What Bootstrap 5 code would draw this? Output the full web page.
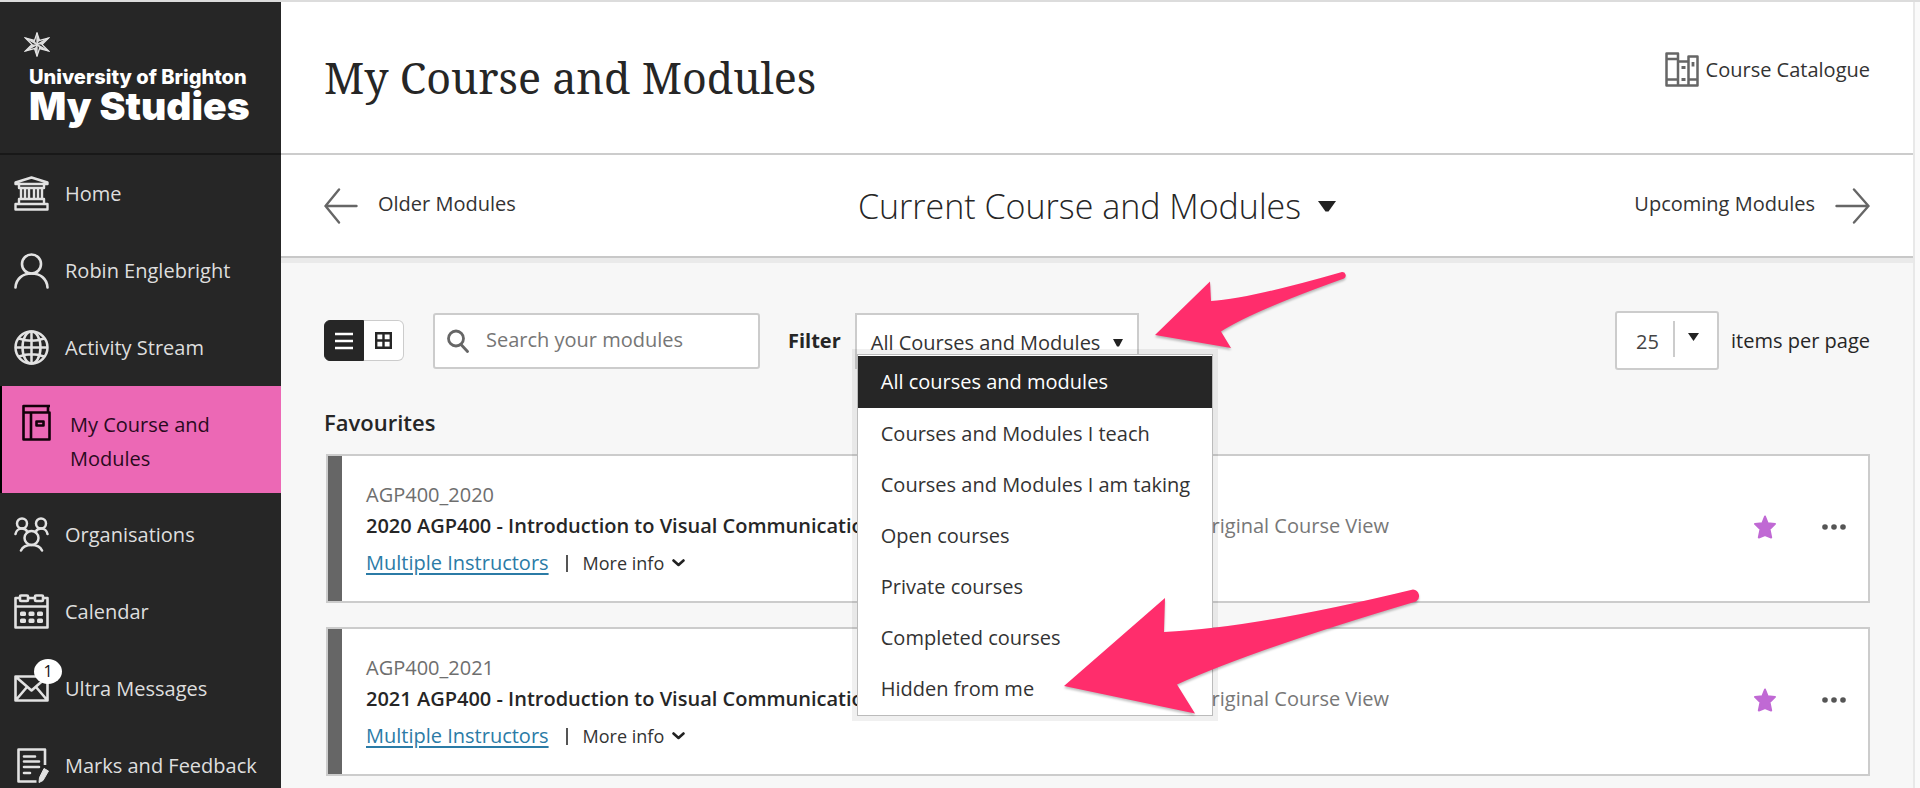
<!DOCTYPE html>
<html lang="en">
<head>
<meta charset="utf-8">
<meta name="viewport" content="width=device-width, initial-scale=1">
<title>My Course and Modules</title>
<link href="https://cdn.jsdelivr.net/npm/bootstrap@5.3.0/dist/css/bootstrap.min.css" rel="stylesheet">
<style>
  body { font-family: "Open Sans", "Noto Sans", sans-serif; font-size: 20px; line-height: 28px; color: #262626; background: #fafafa; }
  .app-shell { border-top: 2px solid #dcdcdc; }
  /* sidebar */
  .side { width: 281px; background: #262626; }
  .brand { height: 153px; padding: 30px 24px 0; border-bottom: 2px solid #181818; color: #fff; font-family: Inter, sans-serif; }
  .brand-top { font-size: 20px; font-weight: 800; line-height: 20px; padding: 10px 5px 0; }
  .brand-main { font-size: 39px; font-weight: 900; line-height: 38px; padding-left: 5px; }
  .side-link { height: 77px; padding-left: 14px; gap: 16px; color: #dedede; text-decoration: none; white-space: nowrap; }
  .side-link svg { color: #e2e2e2; }
  .side-link.current { height: 107px; margin-bottom: 3px; padding: 18px 0 0 16px; background: #ec68b5; color: #2a0a1e; border-left: 2px solid #000; line-height: 34px; white-space: normal; gap: 19px; }
  .side-link.current svg { color: #120009; }
  .count-badge { left: 20px; top: -16px; width: 28px; height: 25px; font-size: 16px; line-height: 24px; background: #fff; color: #111; text-align: center; }
  /* page */
  .page { border-right: 2px solid #e8e8e8; margin-right: 5px; background: #f7f7f7; }
  .page-head { height: 153px; padding: 0 43px; background: #fff; border-bottom: 2px solid #ccc; }
  .page-title { font-family: "Noto Serif", "DejaVu Serif Condensed", "DejaVu Serif", serif; font-size: 43px; line-height: 56px; padding-top: 48px; }
  .catalogue { padding-top: 50px; gap: 7px; }
  .term-bar { height: 103px; padding: 0 43px; background: #fff; border-bottom: 2px solid #c8c8c8; box-shadow: 0 5px 0 #eaeaea; }
  .term-bar a, .catalogue { color: #333; text-decoration: none; }
  .term-btn { font-size: 34px; font-weight: 300; line-height: 44px; gap: 17px; color: #262626; }
  .content { padding: 53px 43px 0; }
  .view-btn { width: 40px; height: 41px; border: 1px solid #ccc; background: #fff; color: #262626; }
  .view-btn.on { background: #262626; border-color: #262626; color: #fff; }
  .boxed { height: 56px; border: 2px solid #ccc; border-radius: 3px; background-color: #fff; }
  .search-box { width: 327px; margin-left: 29px; padding-left: 12px; gap: 17px; }
  .search-box input { border: 0; outline: 0; background: none; width: 260px; padding: 0 0 2px; }
  .search-box input::placeholder { color: #767676; opacity: 1; }
  .filter-label { margin: 0 14px 0 28px; font-weight: 700; }
  .filter-btn { width: 284px; border-radius: 0; padding: 4px 14px 0; color: #333; }
  .filter-menu { top: 41px; left: 2px; width: 356px; padding: 1px 0; border: 1px solid #bbb; border-radius: 0; box-shadow: 0 0 0 5px rgba(0, 0, 0, .06); font-size: 20px; }
  .filter-menu .dropdown-item { height: 51px; line-height: 51px; padding: 0 23px; color: #333; }
  .filter-menu .dropdown-item.active { height: 52px; line-height: 52px; background: #262626; color: #fff; }
  .pointer { pointer-events: none; z-index: 1010; filter: drop-shadow(0 2px 1px rgba(0, 0, 0, .25)); }
  .pointer-filter { left: 300px; top: -42px; }
  .pointer-hidden { left: 206px; top: 234px; }
  .per-page { width: 104px; height: 59px; padding: 2px 0 0 19px; color: #444; appearance: none;
    background: #fff url("data:image/svg+xml,%3Csvg xmlns='http://www.w3.org/2000/svg' width='30' height='36'%3E%3Cpath d='M1 0v36' stroke='%23ccc' stroke-width='2'/%3E%3Cpath d='M15 12h11l-5.500 8z' fill='%23222'/%3E%3C/svg%3E") no-repeat 56px 8px; }
  .section-title { font-size: 22px; font-weight: 600; line-height: 32px; margin: 36px 0 16px; }
  .course { height: 149px; margin: 0 0 24px 2px; background: #fff; border: 2px solid #ccc; }
  .course-bar { width: 14px; background: #666; }
  .course-body { padding: 25px 0 0 24px; }
  .course-code { color: #6e6e6e; font-weight: 500; }
  .course-name { width: 830px; font-weight: 600; line-height: 34px; }
  .course-view { color: #777; line-height: 34px; }
  .course-meta { margin-top: 3px; line-height: 34px; }
  .course-meta a { color: #2b7ba6; text-underline-offset: 3px; }
  .more-btn { font-size: 18px; line-height: 32px; color: #333; gap: 8px; }
  .bar-sep { width: 2px; height: 17px; background: #555; margin: 0 15px 0 17px; }
  .course-actions { gap: 46px; padding: 0 22px 3px 0; }
</style>
</head>
<body>
<div class="app-shell d-flex vh-100 overflow-hidden">
  <aside class="side flex-shrink-0 overflow-hidden">
    <div class="brand">
      <svg class="d-block" width="26" height="25" viewBox="0 0 26 25" fill="none" stroke="#e6e6e6" stroke-width="1.300"><path d="M13 1l2.500 7.500L24.500 6 18 12.500l6.500 6.500-9-2.500L13 24l-2.500-7.500-9 2.500L8 12.500 1.500 6l9 2.500z"/><path d="M13 1v23M1.500 6l23 13M24.500 6l-23 13"/><path d="M13 12.500V1l2.500 7.500zM13 12.500L24.500 6 18 12.500zM13 12.500l11.500 6.500-9-2.500zM13 12.500V24l-2.500-7.500zM13 12.500L1.500 19 8 12.500zM13 12.500L1.500 6l9 2.500z" fill="#ddd" stroke="none"/></svg>
      <div class="brand-top text-nowrap">University of Brighton</div>
      <div class="brand-main text-nowrap">My Studies</div>
    </div>
    <nav>
      <a class="side-link d-flex align-items-center" href="#"><svg width="35" height="35" viewBox="0 0 35 35" fill="none" stroke="currentColor" stroke-width="2.400" stroke-linejoin="round"><path d="M1.500 6.500L17.500 1.500l16 5v1.500h-32zM5 8v4h25V8M7 12v11M11 12v11M15 12v11M20 12v11M24 12v11M28 12v11M5 23h25v5H5zM1.500 28h32v5.500h-32z"/></svg><span>Home</span></a>
      <a class="side-link d-flex align-items-center" href="#"><svg width="35" height="36" viewBox="0 0 35 36" fill="none" stroke="currentColor" stroke-width="2.600" stroke-linecap="round"><circle cx="17.500" cy="11" r="9.500"/><path d="M1.500 34.500C2 25.500 9 20.500 17.500 20.500S33 25.500 33.500 34.500"/></svg><span>Robin Englebright</span></a>
      <a class="side-link d-flex align-items-center" href="#"><svg width="35" height="35" viewBox="0 0 35 35" fill="none" stroke="currentColor" stroke-width="2.500"><circle cx="17.500" cy="17.500" r="16"/><ellipse cx="17.500" cy="17.500" rx="9" ry="16"/><path d="M17.500 1.500v32M1.500 17.500h32M5 8.500q12.500 4.500 25 0M5 26.500q12.500-4.500 25 0"/></svg><span>Activity Stream</span></a>
      <a class="side-link current d-flex align-items-start" href="#" aria-current="page"><svg class="flex-shrink-0 ms-1" width="29" height="37" viewBox="0 0 29 37" fill="none" stroke="currentColor" stroke-width="2.600" stroke-linejoin="round"><path d="M28 2H1.500v33.500H27.500V8.500H1.500M26 2v6M9 8.500v27"/><rect x="14.500" y="17.500" width="7" height="4"/></svg><span class="pt-1">My Course and<br>Modules</span></a>
      <a class="side-link d-flex align-items-center" href="#"><svg width="35" height="35" viewBox="0 0 35 35" fill="none" stroke="currentColor" stroke-width="2.500" stroke-linecap="round"><circle cx="8" cy="6.500" r="5"/><circle cx="27" cy="6.500" r="5"/><circle cx="17.500" cy="21" r="7"/><path d="M1.500 17c.500-3 3-5.500 6.500-5.500 2.500 0 4.500 1.500 5.500 3.500M33.500 17c-.5-3-3-5.500-6.500-5.500-2.500 0-4.500 1.500-5.500 3.500M7 33.500c1.500-3.500 5.500-5.500 10.500-5.500s9 2 10.500 5.500"/></svg><span>Organisations</span></a>
      <a class="side-link d-flex align-items-center" href="#"><svg width="35" height="35" viewBox="0 0 35 35" fill="none" stroke="currentColor" stroke-width="2.600" stroke-linejoin="round"><path d="M6 4H1.500v29.500h32V4H29M14 4h7M1.500 12.500h32"/><rect x="6" y="1.500" width="8" height="5.500" rx="1"/><rect x="21" y="1.500" width="8" height="5.500" rx="1"/><g fill="currentColor" stroke="none"><rect x="6" y="17.500" width="6" height="4.500" rx="1.500"/><rect x="14.500" y="17.500" width="6" height="4.500" rx="1.500"/><rect x="23" y="17.500" width="6" height="4.500" rx="1.500"/><rect x="6" y="24.500" width="6" height="4.500" rx="1.500"/><rect x="14.500" y="24.500" width="6" height="4.500" rx="1.500"/><rect x="23" y="24.500" width="6" height="4.500" rx="1.500"/></g></svg><span>Calendar</span></a>
      <a class="side-link d-flex align-items-center" href="#"><span class="position-relative d-flex"><svg width="35" height="27" viewBox="0 0 35 27" fill="none" stroke="currentColor" stroke-width="2.600" stroke-linejoin="round"><path d="M1.500 1.500h32v24h-32zM1.500 1.500l16 14 16-14M1.500 25.500L13 12M33.500 25.500L22 12"/></svg><span class="count-badge position-absolute rounded-circle">1</span></span><span>Ultra Messages</span></a>
      <a class="side-link d-flex align-items-center" href="#"><svg width="35" height="35" viewBox="0 0 35 35" fill="none" stroke="currentColor" stroke-width="2.600" stroke-linejoin="round"><path d="M31 17V1.500H4.500v32h18"/><path d="M10 8.500h11M10 13.500h15M10 19h15M10 25h6" stroke-linecap="round"/><path d="M30 20.500l4.500 2.500-5.500 9.500-4 2 .5-5z" fill="currentColor" stroke-width="1"/></svg><span>Marks and Feedback</span></a>
    </nav>
  </aside>

  <main class="page flex-grow-1">
    <header class="page-head d-flex justify-content-between align-items-start">
      <h1 class="page-title m-0 fw-normal">My Course and Modules</h1>
      <a class="catalogue d-flex align-items-center" href="#"><svg width="34" height="35" viewBox="0 0 34 35" fill="none" stroke="#666" stroke-width="2.500" stroke-linejoin="round"><path d="M1.500 1.500h11.500v32H1.500zM1.500 7H13M1.500 27.500H13M13 9.500h10.500v24H13M23.500 4.500h9v29h-9zM23.500 27.500h9"/><path d="M16.500 15.500h4M16.500 27.500h4M28 10v4.500" stroke-width="2.800"/></svg><span>Course Catalogue</span></a>
    </header>

    <section class="term-bar d-flex align-items-center position-relative">
      <a class="d-flex align-items-center gap-3 col" href="#"><svg class="me-1" width="34" height="36" viewBox="0 0 34 36" fill="none" stroke="#666" stroke-width="2.400" stroke-linecap="round" stroke-linejoin="round"><path d="M15 1.500L1.500 18 15 34.500M1.500 18h31"/></svg><span class="pb-1">Older Modules</span></a>
      <button class="term-btn btn border-0 p-0 d-flex align-items-center" type="button">Current Course and Modules <svg width="18" height="12" viewBox="0 0 18 12"><path d="M0 1h18L10.500 11.500h-3z" fill="#222"/></svg></button>
      <a class="d-flex align-items-center justify-content-end gap-3 col" href="#"><span class="pb-1">Upcoming Modules</span><svg class="ms-1" width="35" height="36" viewBox="0 0 35 36" fill="none" stroke="#666" stroke-width="2.400" stroke-linecap="round" stroke-linejoin="round"><path d="M19 1.500L33.500 18 19 34.500M33.500 18h-32"/></svg></a>
    </section>

    <div class="content">
      <div class="d-flex align-items-center">
        <div class="d-flex" role="group" aria-label="View">
          <button class="view-btn on rounded-start p-0 d-flex align-items-center justify-content-center" type="button" aria-label="List view"><svg width="18" height="18" viewBox="0 0 18 18" stroke="currentColor" stroke-width="2.600"><path d="M0 2h18M0 9h18M0 16h18"/></svg></button>
          <button class="view-btn rounded-end border-start-0 p-0 d-flex align-items-center justify-content-center" type="button" aria-label="Grid view"><svg width="17" height="17" viewBox="0 0 17 17" fill="none" stroke="currentColor" stroke-width="2.400"><path d="M1.200 1.200h14.600v14.600H1.200zM8.500 1v15M1 8.500h15"/></svg></button>
        </div>
        <div class="search-box boxed d-flex align-items-center">
          <svg width="22" height="24" viewBox="0 0 22 24" fill="none" stroke="#666" stroke-width="2.800" stroke-linecap="round"><circle cx="9" cy="9.500" r="7.500"/><path d="M14 15.500l6.500 7"/></svg>
          <input type="text" placeholder="Search your modules" aria-label="Search your modules">
        </div>
        <label class="filter-label" for="filterBtn">Filter</label>
        <div class="dropdown">
          <button class="filter-btn boxed d-flex align-items-center justify-content-between" id="filterBtn" type="button" aria-expanded="true">All Courses and Modules <svg width="10" height="8" viewBox="0 0 10 8"><path d="M0 0h10L6 7.500H4z" fill="#222"/></svg></button>
          <ul class="filter-menu dropdown-menu show">
            <li><a class="dropdown-item active" href="#">All courses and modules</a></li>
            <li><a class="dropdown-item" href="#">Courses and Modules I teach</a></li>
            <li><a class="dropdown-item" href="#">Courses and Modules I am taking</a></li>
            <li><a class="dropdown-item" href="#">Open courses</a></li>
            <li><a class="dropdown-item" href="#">Private courses</a></li>
            <li><a class="dropdown-item" href="#">Completed courses</a></li>
            <li><a class="dropdown-item" href="#">Hidden from me</a></li>
            <li><svg class="pointer pointer-hidden position-absolute" width="356" height="126" viewBox="0 0 356 126"><path d="M0 97L101 9l-1 34Q190 39 349 0.500a6.500 6.500 0 0 1 3 12Q195 59 113 95.500L131 124.500z" fill="#ff2d6c"/></svg></li>
          </ul>
          <svg class="pointer pointer-filter position-absolute" width="192" height="80" viewBox="0 0 192 80"><path d="M0 64L55 10.500 56 30Q93 28 187 1a3.500 3.500 0 0 1 2 6.500Q98 40 66 60.500L76 77z" fill="#ff2d6c"/></svg>
        </div>
        <div class="ms-auto d-flex align-items-center">
          <select class="per-page boxed me-2" id="perPage"><option>25</option></select>
          <label class="ms-1" for="perPage">items per page</label>
        </div>
      </div>

      <h2 class="section-title">Favourites</h2>

      <article class="course d-flex">
        <div class="course-bar"></div>
        <div class="course-body flex-grow-1">
          <div class="course-code">AGP400_2020</div>
          <div class="d-flex"><div class="course-name">2020 AGP400 - Introduction to Visual Communication</div><div class="course-view">Original Course View</div></div>
          <div class="course-meta d-flex align-items-center"><a href="#">Multiple Instructors</a><span class="bar-sep"></span><button class="more-btn btn border-0 p-0 d-flex align-items-center" type="button">More info <svg width="13" height="8" viewBox="0 0 13 8" fill="none" stroke="#222" stroke-width="2.600" stroke-linecap="round" stroke-linejoin="round"><path d="M1.500 1.500l5 4.500 5-4.500"/></svg></button></div>
        </div>
        <div class="course-actions d-flex align-items-center">
          <button class="btn border-0 p-0 d-flex" type="button" aria-label="Remove from favourites"><svg width="22" height="24" viewBox="0 0 22 24"><path d="M11 1.500l2.700 6.800 7.300.6-5.500 5.400 1.700 8.200-6.200-2.500-6.200 2.500 1.700-8.200L1 8.900l7.300-.6z" fill="#c069d4" stroke="#c069d4" stroke-width="2" stroke-linejoin="round"/></svg></button>
          <button class="btn border-0 p-0 d-flex" type="button" aria-label="More options"><svg width="24" height="6" viewBox="0 0 24 6" fill="#555"><circle cx="3" cy="3" r="2.800"/><circle cx="12" cy="3" r="2.800"/><circle cx="21" cy="3" r="2.800"/></svg></button>
        </div>
      </article>

      <article class="course d-flex">
        <div class="course-bar"></div>
        <div class="course-body flex-grow-1">
          <div class="course-code">AGP400_2021</div>
          <div class="d-flex"><div class="course-name">2021 AGP400 - Introduction to Visual Communication</div><div class="course-view">Original Course View</div></div>
          <div class="course-meta d-flex align-items-center"><a href="#">Multiple Instructors</a><span class="bar-sep"></span><button class="more-btn btn border-0 p-0 d-flex align-items-center" type="button">More info <svg width="13" height="8" viewBox="0 0 13 8" fill="none" stroke="#222" stroke-width="2.600" stroke-linecap="round" stroke-linejoin="round"><path d="M1.500 1.500l5 4.500 5-4.500"/></svg></button></div>
        </div>
        <div class="course-actions d-flex align-items-center">
          <button class="btn border-0 p-0 d-flex" type="button" aria-label="Remove from favourites"><svg width="22" height="24" viewBox="0 0 22 24"><path d="M11 1.500l2.700 6.800 7.300.6-5.500 5.400 1.700 8.200-6.200-2.500-6.200 2.500 1.700-8.200L1 8.900l7.300-.6z" fill="#c069d4" stroke="#c069d4" stroke-width="2" stroke-linejoin="round"/></svg></button>
          <button class="btn border-0 p-0 d-flex" type="button" aria-label="More options"><svg width="24" height="6" viewBox="0 0 24 6" fill="#555"><circle cx="3" cy="3" r="2.800"/><circle cx="12" cy="3" r="2.800"/><circle cx="21" cy="3" r="2.800"/></svg></button>
        </div>
      </article>
    </div>
  </main>
</div>
<script src="https://cdn.jsdelivr.net/npm/bootstrap@5.3.0/dist/js/bootstrap.bundle.min.js"></script>
</body>
</html>
